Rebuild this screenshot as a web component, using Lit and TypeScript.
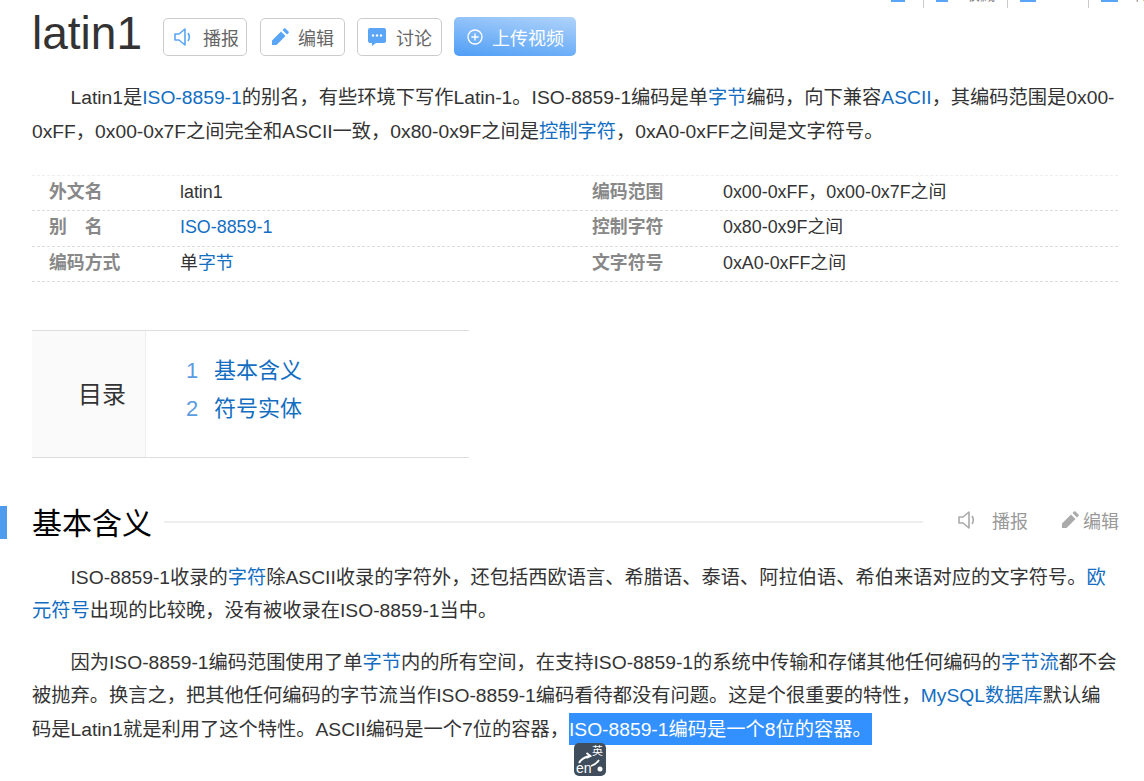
import { LitElement, html, css, svg } from "lit";
import { customElement } from "lit/decorators.js";

const speaker = svg`<path d="M2 7h4l6-5v16l-6-5H2z" fill="none" stroke="currentColor" stroke-width="1.600" stroke-linejoin="round"/><path d="M15 6c1.600 2.400 1.600 5.600 0 8" fill="none" stroke="currentColor" stroke-width="1.600"/>`;
const pencil = svg`<path d="M2 13.500l9-9 4.500 4.500-9 9H2z M12.500 3l1.500-1.500c.5-.5 1-.5 1.500 0l3 3c.5.5.5 1 0 1.500L17 7.500z" fill="currentColor"/>`;
const chat = svg`<path d="M3 1h14a2 2 0 0 1 2 2v11a2 2 0 0 1-2 2h-8l-4 3v-3H3a2 2 0 0 1-2-2V3a2 2 0 0 1 2-2z" fill="currentColor"/><circle cx="6" cy="8.500" r="1.200" fill="#fff"/><circle cx="10" cy="8.500" r="1.200" fill="#fff"/><circle cx="14" cy="8.500" r="1.200" fill="#fff"/>`;
const plus = svg`<circle cx="10" cy="10" r="7.800" fill="none" stroke="currentColor" stroke-width="1.500"/><path d="M10 6v8M6 10h8" stroke="currentColor" stroke-width="1.500"/>`;

@customElement("app-root")
export class AppRoot extends LitElement {
  static styles = css`
    :host { display: block; width: 1144px; height: 781px; overflow: hidden; background: #fff; position: relative;
      font-family: "Liberation Sans", "Noto Sans CJK SC", sans-serif; color: #333; font-size: 19.250px; }
    a { color: #136ec2; text-decoration: none; }
    .tools { height: 8px; overflow: hidden; display: flex; padding-left: 891px; }
    .tools i { display: block; height: 2px; background: #5aa5f5; flex: none; }
    .tools s { display: block; width: 1px; height: 8px; background: #ccc; flex: none; }
    .tools u { display: block; height: 3px; overflow: hidden; flex: none; text-decoration: none; font-size: 15px; line-height: 15px; color: #888; }
    .tools u span { display: block; margin-top: -13px; }
    .w14 { width: 14px; } .w12 { width: 12px; } .w16 { width: 16px; } .w17 { width: 17px; }
    .m18 { margin-left: 18px; } .m13 { margin-left: 13px; } .m17 { margin-left: 17px; } .m12 { margin-left: 12px; } .m15 { margin-left: 15px; } .m52 { margin-left: 52px; }
    .head { display: flex; align-items: flex-start; padding-left: 32px; height: 50px; }
    h1 { margin: 0 20px 0 0; font-size: 46px; font-weight: 400; line-height: 50px; color: #333; width: 111px; }
    .btn { display: flex; align-items: center; box-sizing: border-box; width: 85px; height: 38px; margin-top: 10px; border: 1px solid #ccc; border-radius: 5px;
      padding: 0 0 0 9px; margin-right: 12px; color: #666; font-size: 18px; gap: 9px; background: #fff; }
    .btn svg { width: 20px; height: 20px; color: #5aa5f5; flex: none; }
    .btn.a { width: 84px; margin-right: 13px; gap: 10px; }
    .btn.b { gap: 8px; }
    .btn.up { border: none; color: #fff; background: linear-gradient(8deg, #4f9ef6, #b0d3fa); width: 122px; padding: 0 12px; gap: 8px; height: 39px; margin: 9px 0 0; }
    .btn.up svg { color: #fff; width: 18px; height: 18px; }
    p { margin: 0 27px 0 32px; line-height: 33.500px; text-indent: 38.500px; }
    .lead { margin-top: 23px; }
    .info { margin: 27px 26px 0 32px; display: grid; grid-template-columns: 543px 1fr; border-top: 1px dashed #eee; font-size: 17.875px; }
    .cell { height: 35.300px; line-height: 33px; display: flex; align-items: baseline; border-bottom: 1px dashed #ddd; box-sizing: border-box; }
    .cell b { width: 131px; padding-left: 17px; flex: none; color: #888; font-size: 17.875px; white-space: pre; }
    .toc { margin: 48px 0 0 32px; width: 437px; height: 128px; display: flex; box-sizing: border-box; border-top: 1px solid #ddd; border-bottom: 1px solid #ddd; }
    .toc-t { width: 114px; box-sizing: border-box; background: #fafafa; border-right: 1px solid #eee; display: flex; align-items: center; justify-content: flex-end; padding: 0 19px 2px 0; font-size: 24px; }
    .toc ol { list-style: none; margin: 21px 0 0; padding: 0 0 0 40px; font-size: 22px; line-height: 38px; }
    .toc li { display: flex; }
    .toc li span { width: 28px; color: #5b9bdf; }
    .sec { margin-top: 46px; height: 36px; display: flex; align-items: center; position: relative; padding-left: 32px; }
    .mark { position: absolute; left: 0; top: 2px; width: 7px; height: 33px; background: #4f9cee; }
    h2 { margin: -2px 12px 0 0; font-size: 30px; font-weight: 400; color: #000; white-space: nowrap; }
    .rule { width: 759px; height: 2px; background: #eee; }
    .acts { display: flex; align-items: center; color: #999; font-size: 18px; margin: -3px 0 0 34px; }
    .acts svg { width: 20px; height: 20px; color: #aaa; }
    .acts .sp { margin: 0 32px 0 15px; }
    .acts .ed { margin-left: 3px; }
    .para { margin-top: 21px; }
    .para2 { margin-top: 18px; }
    mark { background: #3390ff; color: #fff; padding: 6px 0 5px; }
    .tip { position: absolute; left: 574px; top: 743px; width: 32px; height: 33px; border-radius: 5px; background: #3f4d5c; color: #fff; }
    .tip .cn { position: absolute; right: 3px; top: 2px; font-size: 11px; line-height: 12px; }
    .tip .en { position: absolute; left: 2px; bottom: 1px; font-size: 14px; line-height: 13px; }
    .tip svg { position: absolute; inset: 0; width: 32px; height: 33px; }
  `;

  render() {
    return html`
      <div class="tools">
        <i class="w14"></i><s class="m18"></s><i class="w12 m12"></i><u class="m17"><span>收藏</span></u><s class="m12"></s>
        <i class="w16 m12"></i><s class="m52"></s><i class="w17 m12"></i><u class="m15"><span>转</span></u>
      </div>
      <div class="head">
        <h1>latin1</h1>
        <div class="btn a"><svg viewBox="0 0 20 20">${speaker}</svg>播报</div>
        <div class="btn b"><svg viewBox="0 0 20 20">${pencil}</svg>编辑</div>
        <div class="btn"><svg viewBox="0 0 20 20">${chat}</svg>讨论</div>
        <div class="btn up"><svg viewBox="0 0 20 20">${plus}</svg>上传视频</div>
      </div>
      <p class="lead">Latin1是<a>ISO-8859-1</a>的别名，有些环境下写作Latin-1。ISO-8859-1编码是单<a>字节</a>编码，向下兼容<a>ASCII</a>，其编码范围是0x00-<wbr>0xFF，0x00-0x7F之间完全和ASCII一致，0x80-0x9F之间是<a>控制字符</a>，0xA0-0xFF之间是文字符号。</p>
      <div class="info">
        <div class="cell"><b>外文名</b>latin1</div><div class="cell"><b>编码范围</b>0x00-0xFF，0x00-0x7F之间</div>
        <div class="cell"><b>别　名</b><a>ISO-8859-1</a></div><div class="cell"><b>控制字符</b>0x80-0x9F之间</div>
        <div class="cell"><b>编码方式</b><span>单<a>字节</a></span></div><div class="cell"><b>文字符号</b>0xA0-0xFF之间</div>
      </div>
      <div class="toc">
        <div class="toc-t">目录</div>
        <ol><li><span>1</span><a>基本含义</a></li><li><span>2</span><a>符号实体</a></li></ol>
      </div>
      <div class="sec">
        <div class="mark"></div>
        <h2>基本含义</h2><div class="rule"></div>
        <div class="acts"><svg viewBox="0 0 20 20">${speaker}</svg><span class="sp">播报</span><svg viewBox="0 0 20 20">${pencil}</svg><span class="ed">编辑</span></div>
      </div>
      <p class="para">ISO-8859-1收录的<a>字符</a>除ASCII收录的字符外，还包括西欧语言、希腊语、泰语、阿拉伯语、希伯来语对应的文字符号。<a>欧元符号</a>出现的比较晚，没有被收录在ISO-8859-1当中。</p>
      <p class="para2">因为ISO-8859-1编码范围使用了单<a>字节</a>内的所有空间，在支持ISO-8859-1的系统中传输和存储其他任何编码的<a>字节流</a>都不会被抛弃。换言之，把其他任何编码的字节流当作ISO-8859-1编码看待都没有问题。这是个很重要的特性，<a>MySQL数据库</a>默认编码是Latin1就是利用了这个特性。ASCII编码是一个7位的容器，<mark>ISO-8859-1编码是一个8位的容器。</mark></p>
      <div class="tip">
        <span class="cn">英</span><span class="en">en</span>
        <svg viewBox="0 0 32 33"><path d="M5 20c2-4 6-6 11-7M12.500 10l4 3-4 2M17 23c3-1 6-3 8-6" fill="none" stroke="#fff" stroke-width="1.800"/><circle cx="26" cy="26" r="2.500" fill="#fff"/></svg>
      </div>
    `;
  }
}
